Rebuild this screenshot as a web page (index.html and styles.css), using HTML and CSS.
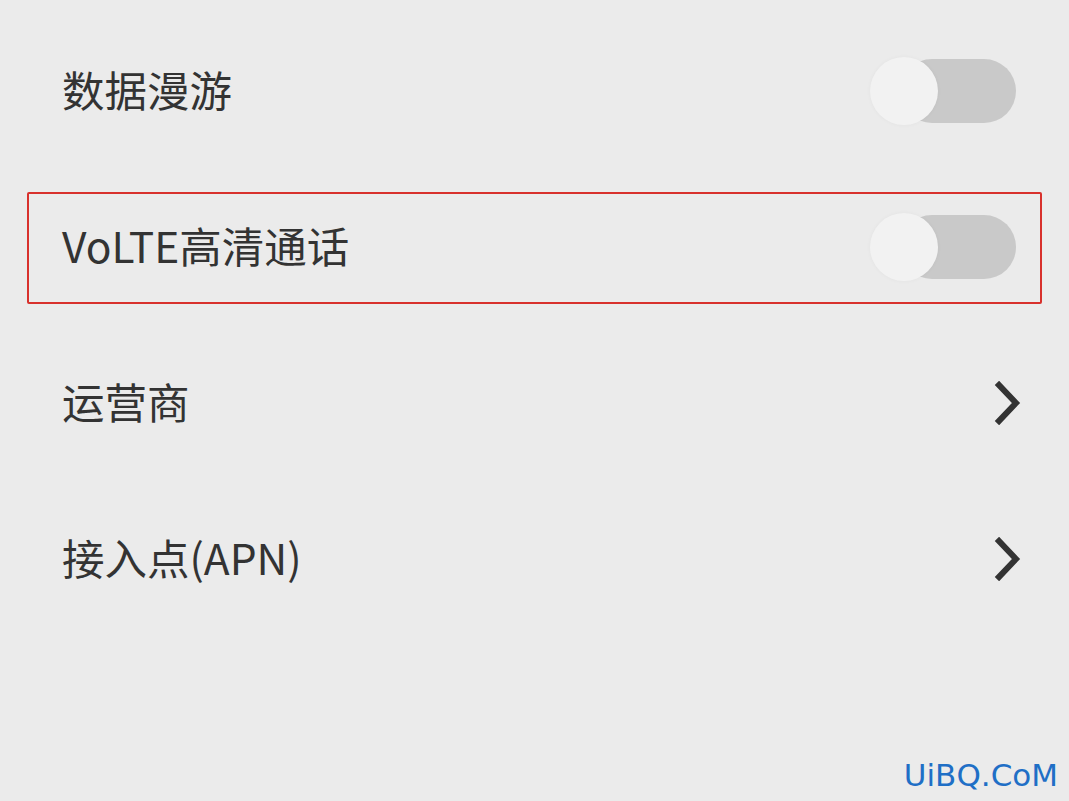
FILE: index.html
```html
<!DOCTYPE html>
<html lang="zh-CN">
<head>
<meta charset="utf-8">
<title>移动网络</title>
<link rel="stylesheet" href="styles.css">
</head>
<body>
<div class="list">
  <div class="row">
    <span class="label">数据漫游</span>
    <span class="switch"><span class="track"></span><span class="thumb"></span></span>
  </div>
  <div class="row highlighted">
    <span class="label">VoLTE高清通话</span>
    <span class="switch"><span class="track"></span><span class="thumb"></span></span>
    <span class="mark"></span>
  </div>
  <div class="row">
    <span class="label">运营商</span>
    <svg class="chev" width="30" height="44" viewBox="0 0 30 44"><path d="M5 4 L22 22 L5 40" fill="none" stroke="#333" stroke-width="6" stroke-linecap="square" stroke-linejoin="miter"/></svg>
  </div>
  <div class="row">
    <span class="label">接入点(APN)</span>
    <svg class="chev" width="30" height="44" viewBox="0 0 30 44"><path d="M5 4 L22 22 L5 40" fill="none" stroke="#333" stroke-width="6" stroke-linecap="square" stroke-linejoin="miter"/></svg>
  </div>
</div>
<div class="watermark">UiBQ.CoM</div>
</body>
</html>
```

FILE: styles.css
```css
html, body {
  margin: 0;
  padding: 0;
  background: #ebebeb;
  width: 1069px;
  height: 801px;
  overflow: hidden;
  position: relative;
}

.list {
  padding-top: 13px;
  display: flex;
  flex-direction: column;
}

.row {
  position: relative;
  height: 156px;
  display: flex;
  align-items: center;
  justify-content: space-between;
  padding: 0 53px 0 62px;
}

.label {
  font-family: "Noto Sans CJK SC", "Noto Sans", sans-serif;
  font-size: 42.5px;
  color: #333333;
  line-height: 1;
  margin-top: -4px;
}

.switch {
  position: relative;
  width: 146px;
  height: 68px;
  display: flex;
  align-items: center;
  justify-content: flex-end;
}

.track {
  width: 116px;
  height: 64px;
  border-radius: 32px;
  background: #c9c9c9;
}

.thumb {
  position: absolute;
  left: 0;
  top: 0;
  width: 68px;
  height: 68px;
  border-radius: 50%;
  background: #f2f2f2;
  box-shadow: 0 0 4px rgba(0, 0, 0, 0.04);
}

.chev {
  margin-right: -8px;
  display: block;
}

.mark {
  position: absolute;
  left: 27px;
  right: 27px;
  top: 23px;
  bottom: 21px;
  border: 2px solid #d8312c;
  border-radius: 2px;
  box-sizing: border-box;
  pointer-events: none;
}

.watermark {
  position: absolute;
  right: 11px;
  bottom: 7px;
  font-family: "DejaVu Sans", "Liberation Sans", sans-serif;
  font-size: 31px;
  color: #1f6fc6;
  line-height: 1.2;
}
```
